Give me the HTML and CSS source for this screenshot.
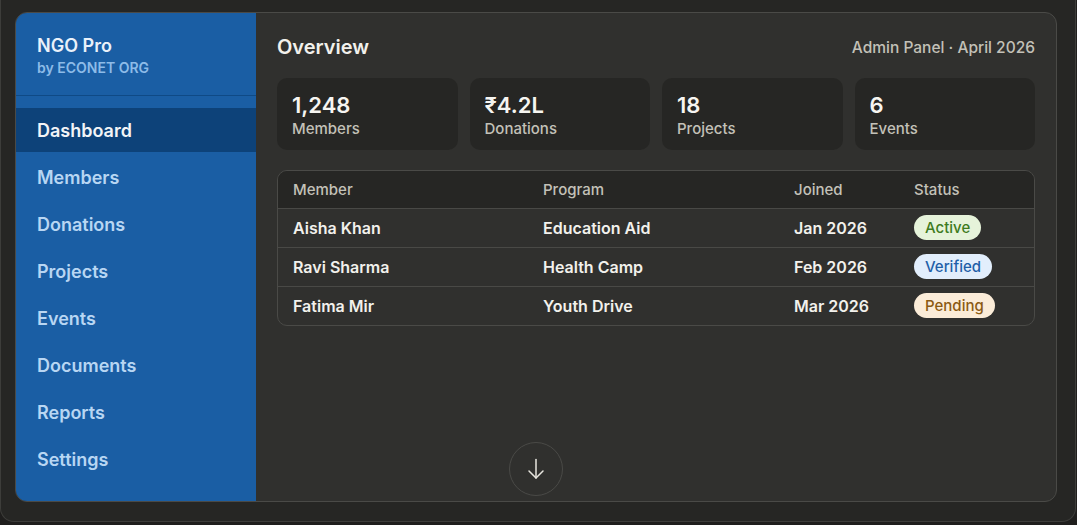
FILE: index.html
```html
<!DOCTYPE html>
<html lang="en">
<head>
  <meta charset="UTF-8" />
  <meta name="viewport" content="width=device-width, initial-scale=1.0"/>
  <title>NGO Pro - Overview</title>
  <link rel="stylesheet" href="styles.css">
</head>
<body>

  <div class="frame">
    <div class="app">
      <aside class="sidebar">
        <div class="brand">
          <div class="brand-name">NGO Pro</div>
          <div class="brand-sub">by ECONET ORG</div>
        </div>
        <nav class="nav">
          <a class="nav-item active" href="#">Dashboard</a>
          <a class="nav-item" href="#">Members</a>
          <a class="nav-item" href="#">Donations</a>
          <a class="nav-item" href="#">Projects</a>
          <a class="nav-item" href="#">Events</a>
          <a class="nav-item" href="#">Documents</a>
          <a class="nav-item" href="#">Reports</a>
          <a class="nav-item" href="#">Settings</a>
        </nav>
      </aside>

      <main class="main">
        <div class="header">
          <h1>Overview</h1>
          <span class="meta">Admin Panel · April 2026</span>
        </div>

        <div class="stats">
          <div class="stat">
            <div class="stat-value">1,248</div>
            <div class="stat-label">Members</div>
          </div>
          <div class="stat">
            <div class="stat-value">₹4.2L</div>
            <div class="stat-label">Donations</div>
          </div>
          <div class="stat">
            <div class="stat-value">18</div>
            <div class="stat-label">Projects</div>
          </div>
          <div class="stat">
            <div class="stat-value">6</div>
            <div class="stat-label">Events</div>
          </div>
        </div>

        <div class="table">
          <div class="row head">
            <span>Member</span>
            <span>Program</span>
            <span>Joined</span>
            <span>Status</span>
          </div>
          <div class="row">
            <span>Aisha Khan</span>
            <span>Education Aid</span>
            <span>Jan 2026</span>
            <span><em class="badge active">Active</em></span>
          </div>
          <div class="row">
            <span>Ravi Sharma</span>
            <span>Health Camp</span>
            <span>Feb 2026</span>
            <span><em class="badge verified">Verified</em></span>
          </div>
          <div class="row">
            <span>Fatima Mir</span>
            <span>Youth Drive</span>
            <span>Mar 2026</span>
            <span><em class="badge pending">Pending</em></span>
          </div>
        </div>
      </main>
    </div>

    <button class="scroll-down" aria-label="Scroll down">
      <svg width="24" height="24" viewBox="0 0 24 24" fill="none" stroke="#e8e6df" stroke-width="1.5" stroke-linecap="round" stroke-linejoin="round">
        <path d="M12 2.5v18.5"/>
        <path d="M5 14l7 7 7-7"/>
      </svg>
    </button>
  </div>

</body>
</html>
```

FILE: styles.css
```css
* {
  box-sizing: border-box;
}

body {
  margin: 0;
  background: #1f1e1d;
  font-family: Inter, 'Noto Sans', sans-serif;
  color: #f0efea;
}

.frame {
  position: relative;
  width: 1076px;
  height: 522px;
  background: #262624;
  border: 1px solid #3d3d3a;
  border-top: none;
  border-radius: 0 0 14px 14px;
  padding: 12px 18px 19px 14px;
}

.app {
  display: flex;
  height: 490px;
  background: #30302e;
  border: 1px solid #4a4a47;
  border-radius: 12px;
  overflow: hidden;
}

/* sidebar */
.sidebar {
  width: 240px;
  flex-shrink: 0;
  background: #1a5ea4;
}

.brand {
  padding: 22px 21px 16px;
  border-bottom: 1px solid #0f4a86;
}

.brand-name {
  font-size: 18px;
  line-height: 22px;
  font-weight: 600;
  color: #eaf1fa;
}

.brand-sub {
  font-size: 14px;
  line-height: 22px;
  font-weight: 600;
  color: #8dbbe8;
}

.nav {
  display: flex;
  flex-direction: column;
  gap: 3px;
  padding-top: 12px;
}

.nav-item {
  display: block;
  height: 44px;
  line-height: 46px;
  padding-left: 21px;
  font-size: 18px;
  font-weight: 600;
  color: #b8d6f3;
  text-decoration: none;
}

.nav-item.active {
  background: #0d4279;
  color: #f2f4f7;
}

/* main */
.main {
  flex: 1;
  padding: 20px 21px;
}

.header {
  display: flex;
  justify-content: space-between;
  align-items: center;
  height: 28px;
}

.header h1 {
  margin: 0;
  font-size: 20px;
  font-weight: 600;
  color: #f2f1ec;
}

.meta {
  font-size: 15.5px;
  font-weight: 500;
  color: #c3c1b8;
}

.stats {
  display: grid;
  grid-template-columns: repeat(4, 1fr);
  gap: 12px;
  margin-top: 17px;
}

.stat {
  height: 72px;
  background: #262624;
  border-radius: 10px;
  padding: 13px 15px 0;
}

.stat-value {
  font-size: 22px;
  line-height: 28px;
  font-weight: 600;
  color: #f6f5f1;
}

.stat-label {
  font-size: 15px;
  line-height: 20px;
  font-weight: 500;
  color: #c3c1b8;
}

.table {
  margin-top: 20px;
  border: 1px solid #4a4a47;
  border-radius: 10px;
  overflow: hidden;
}

.row {
  display: grid;
  grid-template-columns: 250px 251px 120px 1fr;
  align-items: center;
  height: 39px;
  padding-left: 15px;
  padding-bottom: 1px;
  border-top: 1px solid #494946;
  font-size: 16px;
  font-weight: 600;
  color: #f2f1ec;
}

.row.head {
  height: 37px;
  border-top: none;
  background: #262624;
  font-size: 15px;
  font-weight: 500;
  color: #c3c1b8;
}

.badge {
  display: inline-block;
  height: 25px;
  line-height: 25px;
  padding: 0 11px;
  border-radius: 13px;
  font-style: normal;
  font-size: 15px;
  font-weight: 500;
}

.badge.active {
  background: #e6f3da;
  color: #3e7b1f;
}

.badge.verified {
  background: #e2eefc;
  color: #1f5fa8;
}

.badge.pending {
  background: #fbecd8;
  color: #8b5a13;
}

.scroll-down {
  position: absolute;
  left: 508px;
  top: 442px;
  width: 54px;
  height: 54px;
  border-radius: 50%;
  border: 1px solid #4a4a47;
  background: #30302e;
  display: flex;
  align-items: center;
  justify-content: center;
  padding: 0;
  cursor: pointer;
}
```
